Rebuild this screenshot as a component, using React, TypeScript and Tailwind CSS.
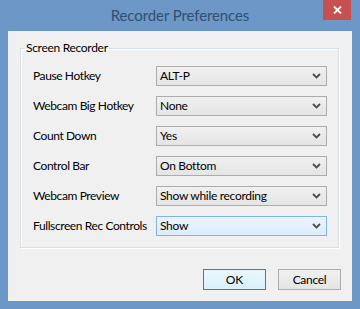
import React from "react";

const font = { fontFamily: 'Lato, "Noto Sans", Arial, sans-serif' };

function Chevron() {
  return (
    <svg width="9" height="6" viewBox="0 0 9 6" className="shrink-0">
      <polyline points="1,1 4.5,4.5 8,1" fill="none" stroke="#4d4d4d" strokeWidth="1.8" />
    </svg>
  );
}

function Select({ value, active }: { value: string; active?: boolean }) {
  return (
    <div
      className={
        active
          ? "w-[171px] h-[20px] flex items-center justify-between pl-[3px] pr-[5px] border border-[#7eb4ea] bg-gradient-to-b from-[#ecf4fc] to-[#dcecfc]"
          : "w-[171px] h-[20px] flex items-center justify-between pl-[3px] pr-[5px] border border-[#acacac] bg-gradient-to-b from-[#f0f0f0] to-[#e5e5e5]"
      }
    >
      <span className="text-[12px] leading-none text-black whitespace-nowrap tracking-[-0.3px]">{value}</span>
      <Chevron />
    </div>
  );
}

const rows: { label: string; value: string; active?: boolean }[] = [
  { label: "Pause Hotkey", value: "ALT-P" },
  { label: "Webcam Big Hotkey", value: "None" },
  { label: "Count Down", value: "Yes" },
  { label: "Control Bar", value: "On Bottom" },
  { label: "Webcam Preview", value: "Show while recording" },
  { label: "Fullscreen Rec Controls", value: "Show", active: true },
];

export default function App() {
  return (
    <div
      style={font}
      className="w-[360px] h-[309px] bg-[#6c97c7] flex flex-col px-[8px] pb-[8px] text-black"
    >
      <div className="relative h-[31px] flex items-center justify-center">
        <span className="text-[15px] text-[#34506f] tracking-[-0.1px]">Recorder Preferences</span>
        <div className="absolute top-0 right-[1px] w-[28px] h-[20px] bg-[#c75050] flex items-center justify-center">
          <svg width="9" height="8" viewBox="0 0 9 8">
            <path d="M1 0.5 L8 7.5 M8 0.5 L1 7.5" stroke="#ffffff" strokeWidth="1.8" />
          </svg>
        </div>
      </div>
      <div className="flex-1 bg-[#f0f0f0] flex flex-col">
        <fieldset className="mt-[9px] ml-[12px] mr-[14px] border border-[#d5dfe5] pt-[10px] pb-[11px] px-0 shadow-[inset_1px_1px_0_#ffffff,1px_1px_0_#ffffff]">
          <legend className="text-[12px] px-[1px] ml-[4px] leading-[16px] tracking-[-0.3px]">Screen Recorder</legend>
          <div className="flex flex-col gap-[10px] pl-[12px] pr-[11px]">
            {rows.map((r) => (
              <div key={r.label} className="flex items-center h-[20px]">
                <span className="w-[123px] text-[12px] leading-none shrink-0 whitespace-nowrap tracking-[-0.4px]">{r.label}</span>
                <Select value={r.value} active={r.active} />
              </div>
            ))}
          </div>
        </fieldset>
        <div className="flex justify-end gap-[12px] mt-auto mb-[11px] mr-[11px]">
          <button className="w-[63px] h-[21px] border border-[#3c7fb1] bg-gradient-to-b from-[#eaf6fd] to-[#d9f0fc] text-[12px] leading-none flex items-center justify-center">
            OK
          </button>
          <button className="w-[63px] h-[21px] border border-[#acacac] bg-gradient-to-b from-[#f0f0f0] to-[#e5e5e5] text-[12px] leading-none flex items-center justify-center tracking-[-0.3px]">
            Cancel
          </button>
        </div>
      </div>
    </div>
  );
}
